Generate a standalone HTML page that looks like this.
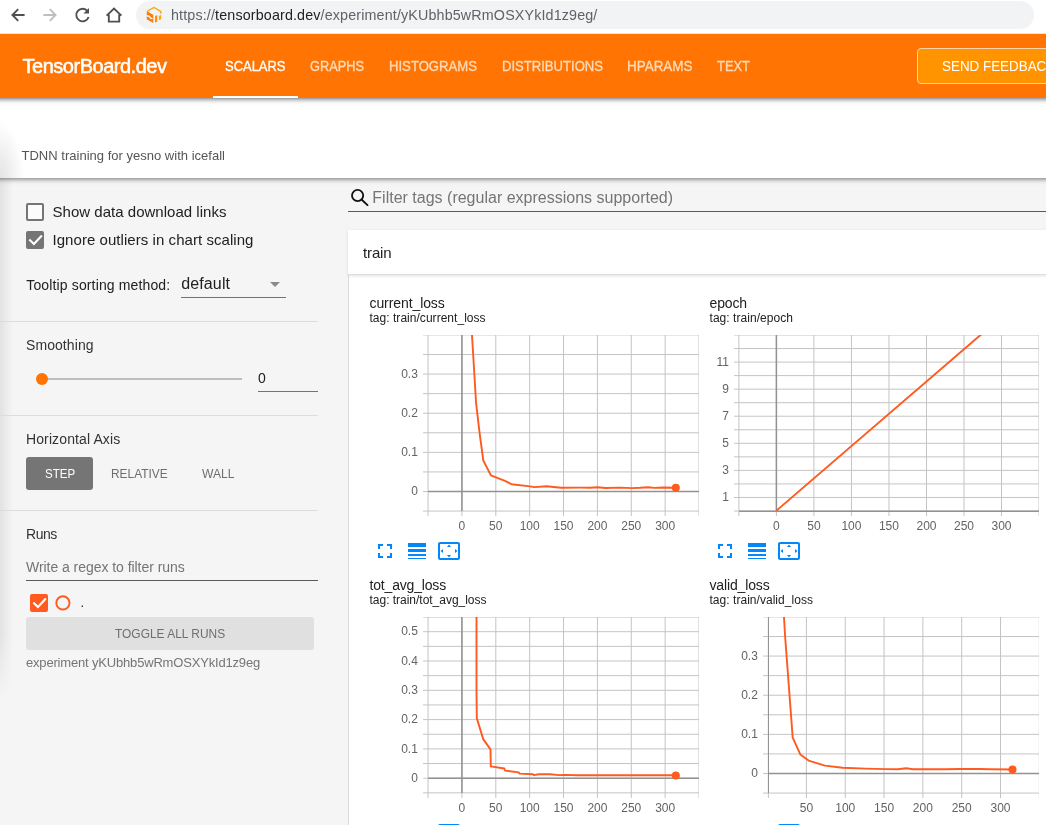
<!DOCTYPE html><html><head><meta charset="utf-8"><title>TensorBoard.dev</title><style>
*{box-sizing:border-box;margin:0;padding:0}
html,body{width:1046px;height:825px;overflow:hidden;background:#f5f5f5;font-family:"Liberation Sans",sans-serif}
#root{position:relative;width:1046px;height:825px;overflow:hidden;background:#f5f5f5}
.a{position:absolute}
.t{position:absolute;white-space:pre;line-height:1;transform-origin:0 0}
#txt{position:absolute;left:0;top:0;width:1046px;height:825px;will-change:transform}
</style></head><body><div id="root">
<div class="a" style="left:348px;top:274px;width:700px;height:560px;background:#fff;border-left:1px solid #dcdcdc"></div>
<div class="a" style="left:348px;top:230px;width:700px;height:44.5px;background:#fff;border-bottom:1px solid #dedede;box-shadow:0 1px 3px rgba(0,0,0,.12)"></div>
<div class="a" style="left:0;top:178px;width:13px;height:520px;background:linear-gradient(90deg,rgba(0,0,0,.075),rgba(0,0,0,0));-webkit-mask-image:linear-gradient(180deg,#000 88%,transparent);mask-image:linear-gradient(180deg,#000 88%,transparent)"></div>
<div class="a" style="left:-20px;top:98px;width:1090px;height:80px;background:#fff;box-shadow:0 1px 5px rgba(0,0,0,.55)"></div>
<div class="a" style="left:0;top:110px;width:40px;height:68px;background:radial-gradient(ellipse 24px 56px at 0 100%,rgba(0,0,0,.11),rgba(0,0,0,0))"></div>
<div class="a" style="left:-20px;top:34px;width:1090px;height:64px;background:#ff7402;box-shadow:0 1px 5px rgba(0,0,0,.6)"></div>
<div class="a" style="left:213px;top:96px;width:85px;height:2px;background:#fff"></div>
<div class="a" style="left:917px;top:48px;width:160px;height:36px;background:#ff9400;border:1px solid #ffd5ad;border-radius:4px"></div>
<div class="a" style="left:0;top:0;width:1046px;height:34px;background:#fff;border-bottom:1px solid #dfe5ee"></div>
<div class="a" style="left:136px;top:1px;width:898px;height:27.600px;border-radius:14px;background:#f1f3f4"></div>
<svg class="a" style="left:0;top:0" width="180" height="34" viewBox="0 0 180 34" fill="none">
<path d="M24.6 15H12.6M18.2 9.2L12.4 15l5.8 5.8" stroke="#4d5156" stroke-width="1.9"/>
<path d="M43.4 15h12M49.8 9.2l5.8 5.8-5.8 5.8" stroke="#bcbfc3" stroke-width="1.9"/>
<path d="M87.6 11.2A6.3 6.3 0 1 0 88.6 17" stroke="#4d5156" stroke-width="1.9"/>
<path d="M89 8v5.6h-5.6z" fill="#4d5156"/>
<path d="M106.6 15.6L114 8.6l7.4 7M108.8 14.4v7.2h10.4v-7.2" stroke="#4d5156" stroke-width="1.9" stroke-linejoin="miter"/>
<g>
<path d="M147.3 11.2L153.9 7.4l6.900 4v2.300" stroke="#ffa300" stroke-width="1.300" fill="none"/>
<path d="M146.800 11.100l6.500 3.800v8l-6.500-3.700z" fill="#ff7a00"/>
<path d="M146.800 15.100l2.700.300 1.500 2.100 1.600.600v.900l-2.100.300-1.500-2.100-2.200-.700z" fill="#f6f2ee"/>
<path d="M155.100 16.200l2.100-1.300v6.700l-2.100 1.200z" fill="#ff8a00"/>
<path d="M158.900 15.900l2.200-1.100v4.400l-2.200 1z" fill="#ffa800"/>
</g>
</svg>
<div class="a" style="left:0;top:321px;width:318px;height:1px;background:#dcdcdc"></div>
<div class="a" style="left:0;top:415px;width:318px;height:1px;background:#dcdcdc"></div>
<div class="a" style="left:0;top:510px;width:318px;height:1px;background:#dcdcdc"></div>
<div class="a" style="left:26px;top:203px;width:18px;height:18px;border:2px solid #757575;border-radius:2px;background:#fbfbfb"></div>
<div class="a" style="left:26px;top:231px;width:18px;height:18px;background:#757575;border-radius:2px"></div>
<svg class="a" style="left:26px;top:231px" width="18" height="18" viewBox="0 0 18 18"><path d="M3.3 8.5L7.900 12.900L15.900 4.500" fill="none" stroke="#fff" stroke-width="2.100"/></svg>
<div class="a" style="left:181px;top:297px;width:105px;height:1px;background:#737373"></div>
<svg class="a" style="left:269.5px;top:282px" width="10" height="5" viewBox="0 0 10 5"><path d="M0 0h10L5 5z" fill="#8a8a8a"/></svg>
<div class="a" style="left:42px;top:378px;width:200px;height:2px;background:#bdbdbd"></div>
<div class="a" style="left:36px;top:373px;width:12px;height:12px;border-radius:6px;background:#ff7402"></div>
<div class="a" style="left:258px;top:390.500px;width:60px;height:1px;background:#737373"></div>
<div class="a" style="left:26px;top:457px;width:67px;height:33px;border-radius:3px;background:#757575"></div>
<div class="a" style="left:26px;top:580px;width:292px;height:1px;background:#5a5a5a"></div>
<div class="a" style="left:30px;top:594px;width:18px;height:18px;background:#ff5a1f;border-radius:2px"></div>
<svg class="a" style="left:30px;top:594px" width="18" height="18" viewBox="0 0 18 18"><path d="M3.3 8.5L7.900 12.900L15.900 4.500" fill="none" stroke="#fff" stroke-width="2.100"/></svg>
<svg class="a" style="left:50px;top:590px" width="26" height="26" viewBox="0 0 26 26"><circle cx="12.900" cy="12.900" r="6.600" fill="none" stroke="#ff5a1f" stroke-width="1.900"/></svg>
<div class="a" style="left:26px;top:617px;width:288px;height:33px;border-radius:3px;background:#e0e0e0"></div>
<svg class="a" style="left:350px;top:188px" width="20" height="20" viewBox="0 0 20 20"><circle cx="7.600" cy="7.500" r="5.600" fill="none" stroke="#111" stroke-width="1.800"/><path d="M11.800 11.800l5.700 5.300" stroke="#111" stroke-width="1.900" stroke-linecap="round"/></svg>
<div class="a" style="left:348px;top:211px;width:700px;height:1px;background:#5a5a5a"></div>
<svg id="charts" width="1046" height="825" viewBox="0 0 1046 825" style="position:absolute;left:0;top:0;will-change:transform" font-family='"Liberation Sans", sans-serif' font-size="12" fill="#636363">
<clipPath id="c1g"><rect x="422.06" y="335" width="276.94" height="182.07"/></clipPath>
<g clip-path="url(#c1g)">
<line x1="423.06" x2="699" y1="511.07" y2="511.07" stroke="#c4c4c4" stroke-width="1"/>
<line x1="423.06" x2="699" y1="491.50" y2="491.50" stroke="#c4c4c4" stroke-width="1"/>
<line x1="423.06" x2="699" y1="471.93" y2="471.93" stroke="#c4c4c4" stroke-width="1"/>
<line x1="423.06" x2="699" y1="452.36" y2="452.36" stroke="#c4c4c4" stroke-width="1"/>
<line x1="423.06" x2="699" y1="432.79" y2="432.79" stroke="#c4c4c4" stroke-width="1"/>
<line x1="423.06" x2="699" y1="413.22" y2="413.22" stroke="#c4c4c4" stroke-width="1"/>
<line x1="423.06" x2="699" y1="393.64" y2="393.64" stroke="#c4c4c4" stroke-width="1"/>
<line x1="423.06" x2="699" y1="374.07" y2="374.07" stroke="#c4c4c4" stroke-width="1"/>
<line x1="423.06" x2="699" y1="354.50" y2="354.50" stroke="#c4c4c4" stroke-width="1"/>
<line x1="423.06" x2="699" y1="334.93" y2="334.93" stroke="#c4c4c4" stroke-width="1"/>
<line x1="428.06" x2="428.06" y1="335" y2="516.0699999999999" stroke="#c4c4c4" stroke-width="1"/>
<line x1="461.93" x2="461.93" y1="335" y2="516.0699999999999" stroke="#c4c4c4" stroke-width="1"/>
<line x1="495.80" x2="495.80" y1="335" y2="516.0699999999999" stroke="#c4c4c4" stroke-width="1"/>
<line x1="529.67" x2="529.67" y1="335" y2="516.0699999999999" stroke="#c4c4c4" stroke-width="1"/>
<line x1="563.54" x2="563.54" y1="335" y2="516.0699999999999" stroke="#c4c4c4" stroke-width="1"/>
<line x1="597.41" x2="597.41" y1="335" y2="516.0699999999999" stroke="#c4c4c4" stroke-width="1"/>
<line x1="631.28" x2="631.28" y1="335" y2="516.0699999999999" stroke="#c4c4c4" stroke-width="1"/>
<line x1="665.15" x2="665.15" y1="335" y2="516.0699999999999" stroke="#c4c4c4" stroke-width="1"/>
<line x1="699.02" x2="699.02" y1="335" y2="516.0699999999999" stroke="#c4c4c4" stroke-width="1"/>
<line x1="461.93" x2="461.93" y1="335" y2="511.07" stroke="#929292" stroke-width="1.5"/>
<line x1="428.06" x2="699" y1="491.5" y2="491.5" stroke="#929292" stroke-width="1.5"/>
</g>
<text x="417.86" y="495.10" text-anchor="end">0</text>
<text x="417.86" y="455.96" text-anchor="end">0.1</text>
<text x="417.86" y="416.82" text-anchor="end">0.2</text>
<text x="417.86" y="377.67" text-anchor="end">0.3</text>
<text x="461.93" y="530.17" text-anchor="middle">0</text>
<text x="495.80" y="530.17" text-anchor="middle">50</text>
<text x="529.67" y="530.17" text-anchor="middle">100</text>
<text x="563.54" y="530.17" text-anchor="middle">150</text>
<text x="597.41" y="530.17" text-anchor="middle">200</text>
<text x="631.28" y="530.17" text-anchor="middle">250</text>
<text x="665.15" y="530.17" text-anchor="middle">300</text>
<clipPath id="c1"><rect x="428.06" y="335" width="278.94" height="176.07"/></clipPath>
<path d="M471.9 330.0 L472.0 335.2 L476.1 403.2 L479.6 433.1 L483.3 460.5 L490.9 475.4 L504.9 480.9 L511.5 484.2 L528.0 486.1 L534.6 487.1 L546.6 486.3 L561.0 487.7 L580.0 487.6 L590.0 487.7 L597.5 487.2 L605.5 488.0 L620.0 487.6 L632.3 488.1 L640.0 487.8 L648.4 487.2 L654.0 487.9 L663.0 487.5 L675.8 487.7" fill="none" stroke="#ff5a1f" stroke-width="1.900" stroke-linejoin="round" clip-path="url(#c1)"/>
<circle cx="675.8" cy="487.7" r="4" fill="#ff5a1f"/>
<path transform="translate(373 539)" d="M7 14H5v5h5v-2H7v-3zm-2-4h2V7h3V5H5v5zm12 7h-3v2h5v-5h-2v3zM14 5v2h3v3h2V5h-5z" fill="#0487f8"/>
<path transform="translate(405 539)" d="M3 17h18v-2H3v2zm0 3h18v-1H3v1zm0-7h18v-3H3v3zm0-9v4h18V4H3z" fill="#0487f8"/>
<path transform="translate(437 539)" d="M12.01 5.5L10 8h4l-1.99-2.5zM18 10v4l2.5-1.99L18 10zM6 10l-2.5 2.01L6 14v-4zm8 6h-4l2.01 2.5L14 16zm7-13H3c-1.1 0-2 .9-2 2v14c0 1.1.9 2 2 2h18c1.1 0 2-.9 2-2V5c0-1.1-.9-2-2-2zm0 16.01H3V4.99h18v14.02z" fill="#0487f8"/>
<clipPath id="c2g"><rect x="733.1" y="335" width="305.9" height="182.0"/></clipPath>
<g clip-path="url(#c2g)">
<line x1="734.1" x2="1039" y1="511.00" y2="511.00" stroke="#c4c4c4" stroke-width="1"/>
<line x1="734.1" x2="1039" y1="497.46" y2="497.46" stroke="#c4c4c4" stroke-width="1"/>
<line x1="734.1" x2="1039" y1="483.92" y2="483.92" stroke="#c4c4c4" stroke-width="1"/>
<line x1="734.1" x2="1039" y1="470.39" y2="470.39" stroke="#c4c4c4" stroke-width="1"/>
<line x1="734.1" x2="1039" y1="456.85" y2="456.85" stroke="#c4c4c4" stroke-width="1"/>
<line x1="734.1" x2="1039" y1="443.31" y2="443.31" stroke="#c4c4c4" stroke-width="1"/>
<line x1="734.1" x2="1039" y1="429.77" y2="429.77" stroke="#c4c4c4" stroke-width="1"/>
<line x1="734.1" x2="1039" y1="416.23" y2="416.23" stroke="#c4c4c4" stroke-width="1"/>
<line x1="734.1" x2="1039" y1="402.70" y2="402.70" stroke="#c4c4c4" stroke-width="1"/>
<line x1="734.1" x2="1039" y1="389.16" y2="389.16" stroke="#c4c4c4" stroke-width="1"/>
<line x1="734.1" x2="1039" y1="375.62" y2="375.62" stroke="#c4c4c4" stroke-width="1"/>
<line x1="734.1" x2="1039" y1="362.08" y2="362.08" stroke="#c4c4c4" stroke-width="1"/>
<line x1="734.1" x2="1039" y1="348.54" y2="348.54" stroke="#c4c4c4" stroke-width="1"/>
<line x1="734.1" x2="1039" y1="335.01" y2="335.01" stroke="#c4c4c4" stroke-width="1"/>
<line x1="738.88" x2="738.88" y1="335" y2="516.0" stroke="#c4c4c4" stroke-width="1"/>
<line x1="776.40" x2="776.40" y1="335" y2="516.0" stroke="#c4c4c4" stroke-width="1"/>
<line x1="813.92" x2="813.92" y1="335" y2="516.0" stroke="#c4c4c4" stroke-width="1"/>
<line x1="851.44" x2="851.44" y1="335" y2="516.0" stroke="#c4c4c4" stroke-width="1"/>
<line x1="888.96" x2="888.96" y1="335" y2="516.0" stroke="#c4c4c4" stroke-width="1"/>
<line x1="926.48" x2="926.48" y1="335" y2="516.0" stroke="#c4c4c4" stroke-width="1"/>
<line x1="964.00" x2="964.00" y1="335" y2="516.0" stroke="#c4c4c4" stroke-width="1"/>
<line x1="1001.52" x2="1001.52" y1="335" y2="516.0" stroke="#c4c4c4" stroke-width="1"/>
<line x1="1039.04" x2="1039.04" y1="335" y2="516.0" stroke="#c4c4c4" stroke-width="1"/>
<line x1="776.4" x2="776.4" y1="335" y2="511.0" stroke="#929292" stroke-width="1.5"/>
<line x1="739.1" x2="1039" y1="511.2" y2="511.2" stroke="#929292" stroke-width="1.5"/>
</g>
<text x="728.90" y="501.06" text-anchor="end">1</text>
<text x="728.90" y="473.99" text-anchor="end">3</text>
<text x="728.90" y="446.91" text-anchor="end">5</text>
<text x="728.90" y="419.83" text-anchor="end">7</text>
<text x="728.90" y="392.76" text-anchor="end">9</text>
<text x="728.90" y="365.68" text-anchor="end">11</text>
<text x="776.40" y="530.10" text-anchor="middle">0</text>
<text x="813.92" y="530.10" text-anchor="middle">50</text>
<text x="851.44" y="530.10" text-anchor="middle">100</text>
<text x="888.96" y="530.10" text-anchor="middle">150</text>
<text x="926.48" y="530.10" text-anchor="middle">200</text>
<text x="964.00" y="530.10" text-anchor="middle">250</text>
<text x="1001.52" y="530.10" text-anchor="middle">300</text>
<clipPath id="c2"><rect x="739.1" y="335" width="307.9" height="176.0"/></clipPath>
<path d="M776.4 510.6 L980.5 335.0 L990.0 326.8" fill="none" stroke="#ff5a1f" stroke-width="1.900" stroke-linejoin="round" clip-path="url(#c2)"/>
<path transform="translate(713 539)" d="M7 14H5v5h5v-2H7v-3zm-2-4h2V7h3V5H5v5zm12 7h-3v2h5v-5h-2v3zM14 5v2h3v3h2V5h-5z" fill="#0487f8"/>
<path transform="translate(745 539)" d="M3 17h18v-2H3v2zm0 3h18v-1H3v1zm0-7h18v-3H3v3zm0-9v4h18V4H3z" fill="#0487f8"/>
<path transform="translate(777 539)" d="M12.01 5.5L10 8h4l-1.99-2.5zM18 10v4l2.5-1.99L18 10zM6 10l-2.5 2.01L6 14v-4zm8 6h-4l2.01 2.5L14 16zm7-13H3c-1.1 0-2 .9-2 2v14c0 1.1.9 2 2 2h18c1.1 0 2-.9 2-2V5c0-1.1-.9-2-2-2zm0 16.01H3V4.99h18v14.02z" fill="#0487f8"/>
<clipPath id="c3g"><rect x="422.06" y="617" width="276.94" height="182.0"/></clipPath>
<g clip-path="url(#c3g)">
<line x1="423.06" x2="699" y1="792.85" y2="792.85" stroke="#c4c4c4" stroke-width="1"/>
<line x1="423.06" x2="699" y1="778.20" y2="778.20" stroke="#c4c4c4" stroke-width="1"/>
<line x1="423.06" x2="699" y1="763.55" y2="763.55" stroke="#c4c4c4" stroke-width="1"/>
<line x1="423.06" x2="699" y1="748.90" y2="748.90" stroke="#c4c4c4" stroke-width="1"/>
<line x1="423.06" x2="699" y1="734.25" y2="734.25" stroke="#c4c4c4" stroke-width="1"/>
<line x1="423.06" x2="699" y1="719.60" y2="719.60" stroke="#c4c4c4" stroke-width="1"/>
<line x1="423.06" x2="699" y1="704.95" y2="704.95" stroke="#c4c4c4" stroke-width="1"/>
<line x1="423.06" x2="699" y1="690.30" y2="690.30" stroke="#c4c4c4" stroke-width="1"/>
<line x1="423.06" x2="699" y1="675.65" y2="675.65" stroke="#c4c4c4" stroke-width="1"/>
<line x1="423.06" x2="699" y1="661.00" y2="661.00" stroke="#c4c4c4" stroke-width="1"/>
<line x1="423.06" x2="699" y1="646.35" y2="646.35" stroke="#c4c4c4" stroke-width="1"/>
<line x1="423.06" x2="699" y1="631.70" y2="631.70" stroke="#c4c4c4" stroke-width="1"/>
<line x1="423.06" x2="699" y1="617.05" y2="617.05" stroke="#c4c4c4" stroke-width="1"/>
<line x1="428.06" x2="428.06" y1="617" y2="798.0" stroke="#c4c4c4" stroke-width="1"/>
<line x1="461.93" x2="461.93" y1="617" y2="798.0" stroke="#c4c4c4" stroke-width="1"/>
<line x1="495.80" x2="495.80" y1="617" y2="798.0" stroke="#c4c4c4" stroke-width="1"/>
<line x1="529.67" x2="529.67" y1="617" y2="798.0" stroke="#c4c4c4" stroke-width="1"/>
<line x1="563.54" x2="563.54" y1="617" y2="798.0" stroke="#c4c4c4" stroke-width="1"/>
<line x1="597.41" x2="597.41" y1="617" y2="798.0" stroke="#c4c4c4" stroke-width="1"/>
<line x1="631.28" x2="631.28" y1="617" y2="798.0" stroke="#c4c4c4" stroke-width="1"/>
<line x1="665.15" x2="665.15" y1="617" y2="798.0" stroke="#c4c4c4" stroke-width="1"/>
<line x1="699.02" x2="699.02" y1="617" y2="798.0" stroke="#c4c4c4" stroke-width="1"/>
<line x1="461.93" x2="461.93" y1="617" y2="793.0" stroke="#929292" stroke-width="1.5"/>
<line x1="428.06" x2="699" y1="778.2" y2="778.2" stroke="#929292" stroke-width="1.5"/>
</g>
<text x="417.86" y="781.80" text-anchor="end">0</text>
<text x="417.86" y="752.50" text-anchor="end">0.1</text>
<text x="417.86" y="723.20" text-anchor="end">0.2</text>
<text x="417.86" y="693.90" text-anchor="end">0.3</text>
<text x="417.86" y="664.60" text-anchor="end">0.4</text>
<text x="417.86" y="635.30" text-anchor="end">0.5</text>
<text x="461.93" y="812.10" text-anchor="middle">0</text>
<text x="495.80" y="812.10" text-anchor="middle">50</text>
<text x="529.67" y="812.10" text-anchor="middle">100</text>
<text x="563.54" y="812.10" text-anchor="middle">150</text>
<text x="597.41" y="812.10" text-anchor="middle">200</text>
<text x="631.28" y="812.10" text-anchor="middle">250</text>
<text x="665.15" y="812.10" text-anchor="middle">300</text>
<clipPath id="c3"><rect x="428.06" y="617" width="278.94" height="176.0"/></clipPath>
<path d="M476.5 610.0 L476.5 690.0 L476.8 718.1 L483.2 739.1 L490.5 749.4 L490.8 766.4 L504.4 768.5 L505.0 770.6 L518.7 772.4 L519.5 773.6 L532.9 774.2 L533.8 775.1 L538.9 774.3 L549.8 774.3 L559.5 775.1 L565.0 774.9 L577.1 775.2 L620.0 775.2 L650.0 775.2 L675.8 775.3" fill="none" stroke="#ff5a1f" stroke-width="1.900" stroke-linejoin="round" clip-path="url(#c3)"/>
<circle cx="675.8" cy="775.4" r="4" fill="#ff5a1f"/>
<path transform="translate(373 821)" d="M7 14H5v5h5v-2H7v-3zm-2-4h2V7h3V5H5v5zm12 7h-3v2h5v-5h-2v3zM14 5v2h3v3h2V5h-5z" fill="#0487f8"/>
<path transform="translate(405 821)" d="M3 17h18v-2H3v2zm0 3h18v-1H3v1zm0-7h18v-3H3v3zm0-9v4h18V4H3z" fill="#0487f8"/>
<path transform="translate(437 821)" d="M12.01 5.5L10 8h4l-1.99-2.5zM18 10v4l2.5-1.99L18 10zM6 10l-2.5 2.01L6 14v-4zm8 6h-4l2.01 2.5L14 16zm7-13H3c-1.1 0-2 .9-2 2v14c0 1.1.9 2 2 2h18c1.1 0 2-.9 2-2V5c0-1.1-.9-2-2-2zm0 16.01H3V4.99h18v14.02z" fill="#0487f8"/>
<clipPath id="c4g"><rect x="762.06" y="617" width="276.94000000000005" height="182.07000000000005"/></clipPath>
<g clip-path="url(#c4g)">
<line x1="763.06" x2="1039" y1="793.07" y2="793.07" stroke="#c4c4c4" stroke-width="1"/>
<line x1="763.06" x2="1039" y1="773.50" y2="773.50" stroke="#c4c4c4" stroke-width="1"/>
<line x1="763.06" x2="1039" y1="753.93" y2="753.93" stroke="#c4c4c4" stroke-width="1"/>
<line x1="763.06" x2="1039" y1="734.36" y2="734.36" stroke="#c4c4c4" stroke-width="1"/>
<line x1="763.06" x2="1039" y1="714.79" y2="714.79" stroke="#c4c4c4" stroke-width="1"/>
<line x1="763.06" x2="1039" y1="695.22" y2="695.22" stroke="#c4c4c4" stroke-width="1"/>
<line x1="763.06" x2="1039" y1="675.64" y2="675.64" stroke="#c4c4c4" stroke-width="1"/>
<line x1="763.06" x2="1039" y1="656.07" y2="656.07" stroke="#c4c4c4" stroke-width="1"/>
<line x1="763.06" x2="1039" y1="636.50" y2="636.50" stroke="#c4c4c4" stroke-width="1"/>
<line x1="763.06" x2="1039" y1="616.93" y2="616.93" stroke="#c4c4c4" stroke-width="1"/>
<line x1="806.42" x2="806.42" y1="617" y2="798.07" stroke="#c4c4c4" stroke-width="1"/>
<line x1="845.24" x2="845.24" y1="617" y2="798.07" stroke="#c4c4c4" stroke-width="1"/>
<line x1="884.06" x2="884.06" y1="617" y2="798.07" stroke="#c4c4c4" stroke-width="1"/>
<line x1="922.88" x2="922.88" y1="617" y2="798.07" stroke="#c4c4c4" stroke-width="1"/>
<line x1="961.70" x2="961.70" y1="617" y2="798.07" stroke="#c4c4c4" stroke-width="1"/>
<line x1="1000.52" x2="1000.52" y1="617" y2="798.07" stroke="#c4c4c4" stroke-width="1"/>
<line x1="1039.34" x2="1039.34" y1="617" y2="798.07" stroke="#c4c4c4" stroke-width="1"/>
<line x1="768.40" x2="768.40" y1="617" y2="798.07" stroke="#c4c4c4" stroke-width="1"/>
<line x1="768.45" x2="768.45" y1="617" y2="793.07" stroke="#929292" stroke-width="1"/>
<line x1="768.06" x2="1039" y1="773.5" y2="773.5" stroke="#929292" stroke-width="1.5"/>
</g>
<text x="757.86" y="777.10" text-anchor="end">0</text>
<text x="757.86" y="737.96" text-anchor="end">0.1</text>
<text x="757.86" y="698.82" text-anchor="end">0.2</text>
<text x="757.86" y="659.67" text-anchor="end">0.3</text>
<text x="806.42" y="812.17" text-anchor="middle">50</text>
<text x="845.24" y="812.17" text-anchor="middle">100</text>
<text x="884.06" y="812.17" text-anchor="middle">150</text>
<text x="922.88" y="812.17" text-anchor="middle">200</text>
<text x="961.70" y="812.17" text-anchor="middle">250</text>
<text x="1000.52" y="812.17" text-anchor="middle">300</text>
<clipPath id="c4"><rect x="768.06" y="617" width="278.94000000000005" height="176.07000000000005"/></clipPath>
<path d="M783.6 610.0 L784.0 617.2 L785.1 636.2 L792.7 737.6 L800.3 754.4 L808.6 760.6 L825.0 765.6 L842.5 767.8 L865.4 768.6 L885.0 769.1 L898.0 769.3 L906.2 768.3 L913.0 769.3 L945.0 769.3 L960.0 769.0 L980.0 769.0 L990.0 769.3 L1012.5 769.5" fill="none" stroke="#ff5a1f" stroke-width="1.900" stroke-linejoin="round" clip-path="url(#c4)"/>
<circle cx="1012.5" cy="769.6" r="4" fill="#ff5a1f"/>
<path transform="translate(713 821)" d="M7 14H5v5h5v-2H7v-3zm-2-4h2V7h3V5H5v5zm12 7h-3v2h5v-5h-2v3zM14 5v2h3v3h2V5h-5z" fill="#0487f8"/>
<path transform="translate(745 821)" d="M3 17h18v-2H3v2zm0 3h18v-1H3v1zm0-7h18v-3H3v3zm0-9v4h18V4H3z" fill="#0487f8"/>
<path transform="translate(777 821)" d="M12.01 5.5L10 8h4l-1.99-2.5zM18 10v4l2.5-1.99L18 10zM6 10l-2.5 2.01L6 14v-4zm8 6h-4l2.01 2.5L14 16zm7-13H3c-1.1 0-2 .9-2 2v14c0 1.1.9 2 2 2h18c1.1 0 2-.9 2-2V5c0-1.1-.9-2-2-2zm0 16.01H3V4.99h18v14.02z" fill="#0487f8"/>
</svg>
<div id="txt">
<span class="t" id="url" style="left:171px;top:8.00px;font-size:14.3px;color:#5f6368;letter-spacing:0.146px">https://<span style="color:#202124">tensorboard.dev</span>/experiment/yKUbhb5wRmOSXYkId1z9eg/</span>
<span class="t" id="t0" style="left:22.5px;top:56.00px;font-size:20px;color:#fff;letter-spacing:-0.480px;-webkit-text-stroke:0.55px #fff;">TensorBoard.dev</span>
<span class="t" id="t1" style="left:225px;top:59.00px;font-size:14px;color:#fff;transform:scaleX(0.9257);-webkit-text-stroke:0.3px #fff;">SCALARS</span>
<span class="t" id="t2" style="left:310.4px;top:59.00px;font-size:14px;color:#ffdab8;transform:scaleX(0.9133);-webkit-text-stroke:0.35px #ffdab8;">GRAPHS</span>
<span class="t" id="t3" style="left:389.3px;top:59.00px;font-size:14px;color:#ffdab8;transform:scaleX(0.9374);-webkit-text-stroke:0.35px #ffdab8;">HISTOGRAMS</span>
<span class="t" id="t4" style="left:501.5px;top:59.00px;font-size:14px;color:#ffdab8;transform:scaleX(0.9341);-webkit-text-stroke:0.35px #ffdab8;">DISTRIBUTIONS</span>
<span class="t" id="t5" style="left:627px;top:59.00px;font-size:14px;color:#ffdab8;transform:scaleX(0.9604);-webkit-text-stroke:0.35px #ffdab8;">HPARAMS</span>
<span class="t" id="t6" style="left:716.5px;top:59.00px;font-size:14px;color:#ffdab8;transform:scaleX(0.9223);-webkit-text-stroke:0.35px #ffdab8;">TEXT</span>
<span class="t" id="t7" style="left:942px;top:59.00px;font-size:14px;color:#fff;transform:scaleX(0.9573);">SEND FEEDBACK</span>
<span class="t" id="t8" style="left:21.5px;top:149.00px;font-size:13px;color:#555;letter-spacing:0.013px;">TDNN training for yesno with icefall</span>
<span class="t" id="t9" style="left:52.5px;top:204.00px;font-size:15px;color:#212121;letter-spacing:0.023px;">Show data download links</span>
<span class="t" id="t10" style="left:52.5px;top:232.00px;font-size:15px;color:#212121;letter-spacing:0.054px;">Ignore outliers in chart scaling</span>
<span class="t" id="t11" style="left:26.3px;top:278.00px;font-size:14px;color:#212121;letter-spacing:0.137px;">Tooltip sorting method:</span>
<span class="t" id="t12" style="left:181.2px;top:276.00px;font-size:16px;color:#212121;letter-spacing:0.136px;">default</span>
<span class="t" id="t13" style="left:26px;top:338.00px;font-size:14px;color:#333;letter-spacing:0.074px;">Smoothing</span>
<span class="t" id="t14" style="left:258px;top:371.00px;font-size:14px;color:#212121;letter-spacing:-0.797px;">0</span>
<span class="t" id="t15" style="left:26px;top:432.00px;font-size:14px;color:#333;letter-spacing:0.114px;">Horizontal Axis</span>
<span class="t" id="t16" style="left:44.5px;top:467.00px;font-size:13px;color:#fff;transform:scaleX(0.8920);">STEP</span>
<span class="t" id="t17" style="left:110.5px;top:467.00px;font-size:13px;color:#6e6e6e;transform:scaleX(0.9145);">RELATIVE</span>
<span class="t" id="t18" style="left:201.6px;top:467.00px;font-size:13px;color:#6e6e6e;transform:scaleX(0.9306);">WALL</span>
<span class="t" id="t19" style="left:26px;top:527.00px;font-size:14px;color:#333;letter-spacing:-0.447px;">Runs</span>
<span class="t" id="t20" style="left:26px;top:560.00px;font-size:14px;color:#757575;letter-spacing:-0.048px;">Write a regex to filter runs</span>
<span class="t" id="t21" style="left:80.5px;top:596.00px;font-size:13px;color:#222;">.</span>
<span class="t" id="t22" style="left:114.8px;top:627.00px;font-size:13px;color:#6e6e6e;transform:scaleX(0.9188);">TOGGLE ALL RUNS</span>
<span class="t" id="t23" style="left:26px;top:656.00px;font-size:13px;color:#757575;letter-spacing:-0.179px;">experiment yKUbhb5wRmOSXYkId1z9eg</span>
<span class="t" id="t24" style="left:372.3px;top:190.00px;font-size:16px;color:#757575;letter-spacing:0.005px;">Filter tags (regular expressions supported)</span>
<span class="t" id="t25" style="left:363.1px;top:245.00px;font-size:15px;color:#212121;letter-spacing:-0.158px;">train</span>
<span class="t" id="t26" style="left:369.5px;top:296.00px;font-size:14px;color:#212121;letter-spacing:-0.089px;">current_loss</span>
<span class="t" id="t27" style="left:369.5px;top:312.00px;font-size:12px;color:#212121;letter-spacing:0.031px;">tag: train/current_loss</span>
<span class="t" id="t28" style="left:709.5px;top:296.00px;font-size:14px;color:#212121;letter-spacing:-0.131px;">epoch</span>
<span class="t" id="t29" style="left:709.5px;top:312.00px;font-size:12px;color:#212121;letter-spacing:0.048px;">tag: train/epoch</span>
<span class="t" id="t30" style="left:369.5px;top:578.00px;font-size:14px;color:#212121;letter-spacing:-0.176px;">tot_avg_loss</span>
<span class="t" id="t31" style="left:369.5px;top:594.00px;font-size:12px;color:#212121;letter-spacing:-0.018px;">tag: train/tot_avg_loss</span>
<span class="t" id="t32" style="left:709.5px;top:578.00px;font-size:14px;color:#212121;letter-spacing:-0.148px;">valid_loss</span>
<span class="t" id="t33" style="left:709.5px;top:594.00px;font-size:12px;color:#212121;letter-spacing:0.036px;">tag: train/valid_loss</span>
</div>
</div></body></html>
